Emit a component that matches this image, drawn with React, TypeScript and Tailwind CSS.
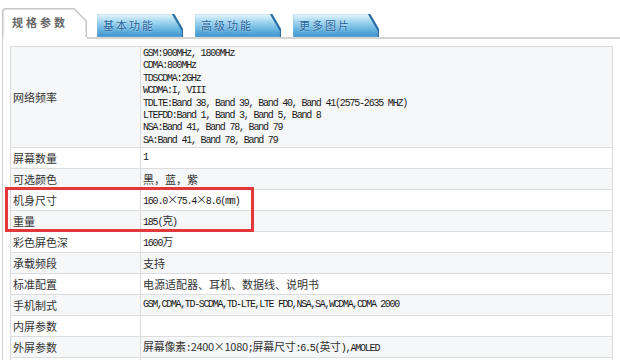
const mono = "font-['Liberation_Mono','Noto_Sans_CJK_SC',monospace] text-[10px] tracking-[-1.2px] text-[#1a1a1a]";
const cjk = "font-['Noto_Sans_CJK_SC','Noto_Sans',sans-serif] text-[11px] text-[#333]";

const bands = [
  "GSM:900MHz, 1800MHz",
  "CDMA:800MHz",
  "TDSCDMA:2GHz",
  "WCDMA:I, VIII",
  "TDLTE:Band 38, Band 39, Band 40, Band 41(2575-2635 MHZ)",
  "LTEFDD:Band 1, Band 3, Band 5, Band 8",
  "NSA:Band 41, Band 78, Band 79",
  "SA:Band 41, Band 78, Band 79",
];

type Row = { label: string; value: React.ReactNode };

const rows: Row[] = [
  { label: "屏幕数量", value: <span className={mono}>1</span> },
  { label: "可选颜色", value: <span className={cjk}>黑，蓝，紫</span> },
  {
    label: "机身尺寸",
    value: (
      <span className={mono}>
        160.0<span className={cjk}>×</span>75.4<span className={cjk}>×</span>8.6(mm)
      </span>
    ),
  },
  {
    label: "重量",
    value: (
      <span className={mono}>
        185(<span className={cjk}>克</span>)
      </span>
    ),
  },
  {
    label: "彩色屏色深",
    value: (
      <span className={mono}>
        1600<span className={cjk}>万</span>
      </span>
    ),
  },
  { label: "承载频段", value: <span className={cjk}>支持</span> },
  { label: "标准配置", value: <span className={cjk}>电源适配器、耳机、数据线、说明书</span> },
  {
    label: "手机制式",
    value: <span className={mono + " tracking-[-1.35px]"}>GSM,CDMA,TD-SCDMA,TD-LTE,LTE FDD,NSA,SA,WCDMA,CDMA 2000</span>,
  },
  { label: "内屏参数", value: null },
  {
    label: "外屏参数",
    value: (
      <span className={cjk + " tracking-[-0.3px]"}>
        屏幕像素<span className={mono}>:</span>2400×1080<span className={mono}>;</span>屏幕尺寸
        <span className={mono}>:6.5(</span>英寸<span className={mono}>),AMOLED</span>
      </span>
    ),
  },
  { label: "", value: null },
];

function BlueTab({ label }: { label: string }) {
  return (
    <div className="relative w-[86px] h-[23px] shrink-0">
      <svg width="86" height="23" viewBox="0 0 86 23" className="absolute inset-0">
        <defs>
          <linearGradient id="tabBlue" x1="0" y1="0" x2="0" y2="1">
            <stop offset="0%" stopColor="#eaf7fd" />
            <stop offset="30%" stopColor="#a9d9f0" />
            <stop offset="70%" stopColor="#62b1de" />
            <stop offset="100%" stopColor="#3f93cc" />
          </linearGradient>
        </defs>
        <path d="M0 23 L0 2 Q0 0 2 0 L77 0 L86 17 L86 23 Z" fill="url(#tabBlue)" stroke="#8cc3e2" strokeWidth="0.6" />
        <path d="M76 0 L86 17 L86 23" fill="none" stroke="#2c6ea3" strokeWidth="2.2" />
      </svg>
      <span className="relative block pl-[6px] pt-[4px] font-['Noto_Sans_CJK_SC',sans-serif] text-[11px] leading-[14px] tracking-[2px] text-[#1d5f97] [text-shadow:0_0_2px_#e8f6ff]">
        {label}
      </span>
    </div>
  );
}

export default function App() {
  return (
    <div className="relative w-[620px] h-[360px] overflow-hidden bg-white">
      {/* tab strip */}
      <div className="flex h-[37px] items-end pl-[2px]">
        <div className="relative w-[85px] h-[29px] shrink-0">
          <svg width="85" height="29" viewBox="0 0 85 29" className="absolute inset-0">
            <path d="M0.75 29 L0.75 4 Q0.75 0.75 4 0.75 L72 0.75 L84.25 13 L84.25 29" fill="#fff" stroke="#c6c6c6" strokeWidth="1.5" />
          </svg>
          <span className="relative block pl-[10px] pt-[7px] font-['Noto_Sans_CJK_SC',sans-serif] text-[11px] leading-[14px] font-bold tracking-[3px] text-[#666]">
            规格参数
          </span>
        </div>
        <div className="ml-[10px] flex gap-[12px]">
          <BlueTab label="基本功能" />
          <BlueTab label="高级功能" />
          <BlueTab label="更多图片" />
        </div>
      </div>

      {/* content panel */}
      <div className="ml-[2px] border-l border-[#cfcfcf]">
        <div className="flex">
          <div className="w-[84px] shrink-0" />
          <div className="flex-1 h-[2px] bg-[#d4d4d4]" />
        </div>

        <div className="mt-[7px] ml-[7px] w-[603px] border border-[#dcdcdc]">
          <div className="grid grid-cols-[130px_1fr] border-b border-[#dcdcdc] bg-[#f6f7f9]">
            <div className={`${cjk} flex items-center pl-[2px] border-r border-[#dcdcdc] h-[100px]`}>网络频率</div>
            <div className="pl-[2px] pt-[1px]">
              {bands.map((b) => (
                <div key={b} className={`${mono} leading-[12.4px] whitespace-pre`}>
                  {b}
                </div>
              ))}
            </div>
          </div>
          {rows.map((r, i) => (
            <div
              key={i}
              className={`grid grid-cols-[130px_1fr] h-[21px] border-b border-[#dcdcdc] ${i % 2 === 1 ? "bg-[#f6f7f9]" : "bg-white"}`}
            >
              <div className={`${cjk} flex items-center pl-[2px] border-r border-[#dcdcdc] leading-none`}>{r.label}</div>
              <div className="flex items-center pl-[2px] whitespace-pre leading-none">{r.value}</div>
            </div>
          ))}
        </div>
      </div>

      {/* highlight box */}
      <div className="absolute left-[5px] top-[187px] w-[249px] h-[45px] border-[3px] border-[#e2383c]" />
    </div>
  );
}
